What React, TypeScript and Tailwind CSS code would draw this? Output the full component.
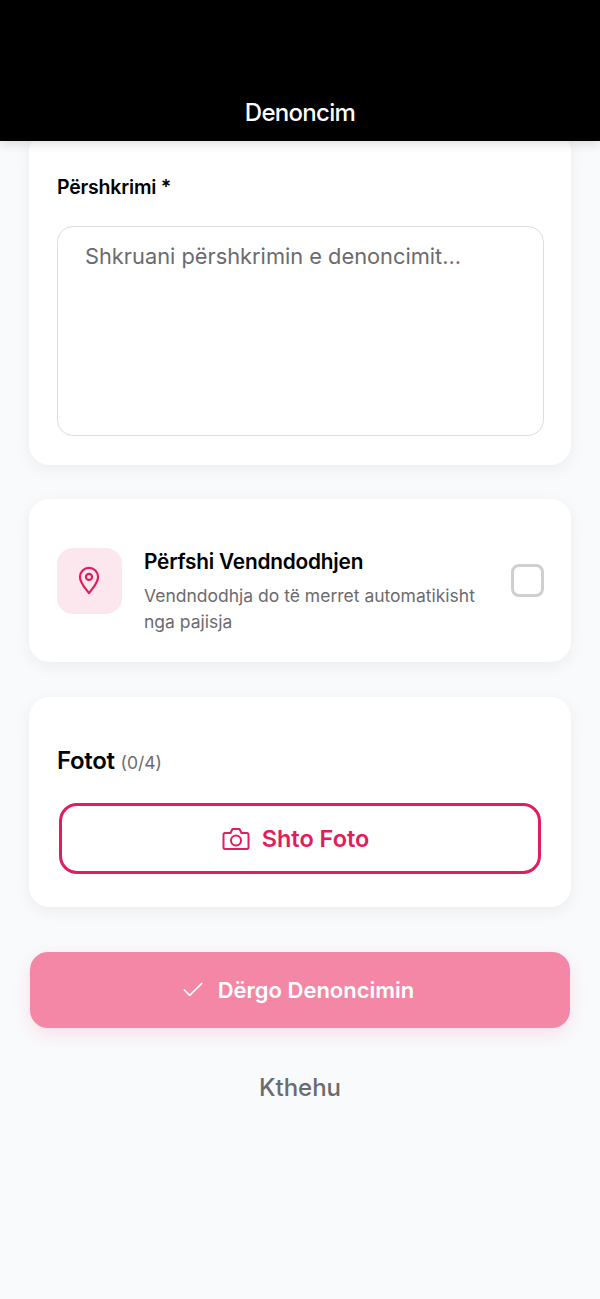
import React from "react";
import { Check } from "lucide-react";

function PinIcon() {
  return (
    <svg width="22" height="29" viewBox="0 0 24 32" fill="none" stroke="#e11d5b" strokeWidth="2.400" strokeLinejoin="round">
      <path d="M12 30C8 24.500 2 18.500 2 12a10 10 0 0 1 20 0c0 6.500-6 12.500-10 18Z" />
      <circle cx="12" cy="12" r="3.400" />
    </svg>
  );
}

function CameraIcon() {
  return (
    <svg width="28" height="24" viewBox="0 0 28 24" fill="none" stroke="#e11d5b" strokeWidth="2" strokeLinejoin="round" strokeLinecap="round">
      <path d="M1.500 7.500a1.500 1.500 0 0 1 1.500-1.500h5.500l2-4h7l2 4h5.500a1.500 1.500 0 0 1 1.500 1.500v13a1.500 1.500 0 0 1-1.500 1.500h-22a1.500 1.500 0 0 1-1.500-1.500Z" />
      <circle cx="14" cy="13.500" r="5" />
    </svg>
  );
}

export default function App() {
  const cardClass =
    "bg-white rounded-[20px] border border-white shadow-[0_4px_16px_rgba(0,0,0,0.06)] w-[542px]";

  return (
    <div className="h-[1299px] w-[600px] overflow-hidden bg-[#f9fafc] font-['Inter','Noto_Sans',sans-serif] flex flex-col">
      {/* header */}
      <div className="relative z-10 h-[141px] shrink-0 bg-black flex items-end justify-center pb-[13px] shadow-[0_3px_10px_rgba(0,0,0,0.12)]">
        <h1 className="text-white text-[24px] leading-[30px] font-medium tracking-[-0.7px]">Denoncim</h1>
      </div>

      <div className="flex flex-col items-center -mt-[10px]">
        {/* description */}
        <div className={`${cardClass} h-[334px] px-[27px] pt-[42px]`}>
          <label className="block text-[19.500px] leading-[26px] font-semibold text-black tracking-[-0.2px]">Përshkrimi *</label>
          <textarea
            placeholder="Shkruani përshkrimin e denoncimit..."
            className="mt-[26px] block w-[487px] h-[210px] resize-none rounded-[16px] border border-[#dcdde0] bg-white pl-[27px] pr-[20px] py-[14px] text-[21.800px] leading-[30px] text-[#6b6b6f] placeholder:text-[#6b6b6f] outline-none"
          />
        </div>

        {/* location */}
        <div className={`${cardClass} mt-[34px] h-[163px] px-[27px] flex items-center`}>
          <div className="w-[65px] h-[66px] rounded-[16px] bg-[#fde7ee] flex items-center justify-center shrink-0 pr-[2px]">
            <PinIcon />
          </div>
          <div className="ml-[22px] flex-1 pt-[22px]">
            <p className="text-[20.800px] leading-[26px] font-semibold text-black tracking-[-0.2px]">Përfshi Vendndodhjen</p>
            <p className="mt-[8px] text-[17.500px] leading-[26px] text-[#6b6b6f]">
              Vendndodhja do të merret automatikisht
              <br />
              nga pajisja
            </p>
          </div>
          <div className="w-[33px] h-[33px] rounded-[8px] border-[3px] border-[#cfcfd2] bg-white shrink-0 ml-[1px] -mr-[1px]" />
        </div>

        {/* photos */}
        <div className={`${cardClass} mt-[35px] h-[210px] px-[27px] pt-[48px]`}>
          <p className="text-[24px] leading-[30px] font-semibold text-black tracking-[-0.3px]">
            Fotot <span className="text-[17.500px] font-normal text-[#6b6b6f] tracking-normal">(0/4)</span>
          </p>
          <button className="mt-[25px] ml-[2px] w-[482px] h-[71px] rounded-[18px] border-[3px] border-[#e11d5b] bg-white flex items-center justify-center gap-[12px] pr-[9px]">
            <CameraIcon />
            <span className="text-[23.500px] font-semibold text-[#e11d5b]">Shto Foto</span>
          </button>
        </div>

        {/* submit */}
        <button className="mt-[45px] w-[540px] h-[76px] rounded-[18px] bg-[#f487a5] shadow-[0_6px_18px_rgba(225,29,91,0.12)] flex items-center justify-center gap-[12px] pr-[6px]">
          <Check size={26} color="#ffffff" strokeWidth={1.600} />
          <span className="text-[22px] font-semibold text-white">Dërgo Denoncimin</span>
        </button>

        <button className="mt-[45px] text-[24px] leading-[30px] font-medium text-[#6b6b6f]">Kthehu</button>
      </div>
    </div>
  );
}
